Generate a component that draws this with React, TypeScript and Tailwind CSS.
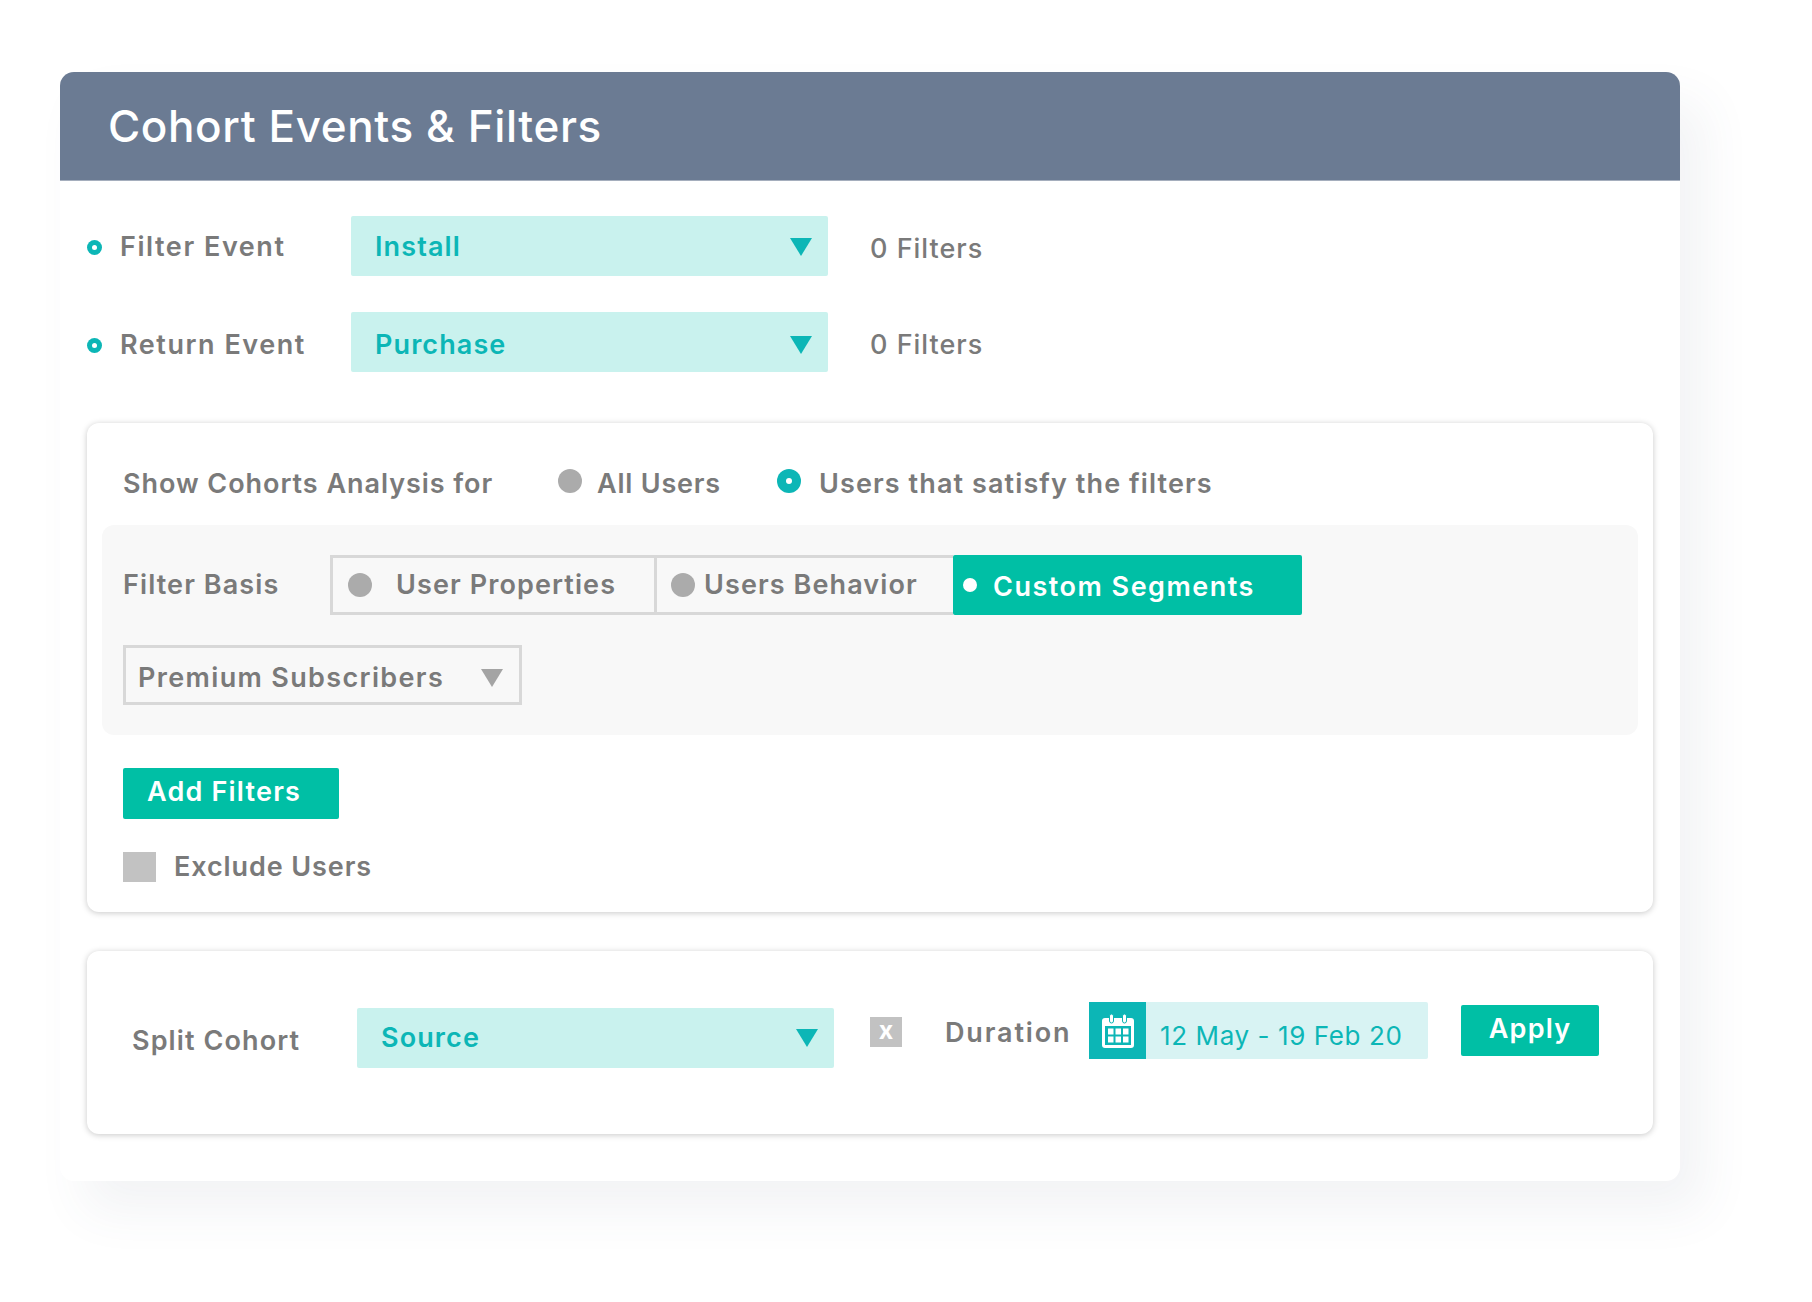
const font = { fontFamily: '"Inter", "Noto Sans", sans-serif' };

function Tri({ color, className = "" }: { color: string; className?: string }) {
  return (
    <svg width="22" height="18" viewBox="0 0 22 18" className={className}>
      <polygon points="0,0 22,0 11,18" fill={color} />
    </svg>
  );
}

function Bullet({ className = "" }: { className?: string }) {
  return <span className={`flex h-[15px] w-[15px] shrink-0 items-center justify-center rounded-full bg-[#0cb6b6] ${className}`}><span className="h-[5px] w-[5px] rounded-full bg-white" /></span>;
}

function Select({ label, className = "" }: { label: string; className?: string }) {
  return (
    <div className={`flex h-[60px] w-[477px] items-center justify-between rounded-[2px] bg-[#c9f2ee] pl-6 pr-[16px] text-[27px] font-semibold tracking-[1.1px] text-[#0cb6b6] ${className}`}>
      <span>{label}</span>
      <Tri color="#0cb6b6" />
    </div>
  );
}

function EventRow({ label, value, className = "", shift, selectShift }: { label: string; value: string; className?: string; shift: string; selectShift: string }) {
  return (
    <div className={`flex h-[60px] items-center ${className}`}>
      <Bullet className={shift} />
      <span className={`ml-[18px] w-[231px] text-[27px] font-semibold tracking-[1.55px] text-[#7a7a7a] ${shift}`}>{label}</span>
      <Select label={value} className={selectShift} />
      <span className="ml-[42px] mt-[6px] text-[27px] font-medium tracking-[1px] text-[#7a7a7a]">0 Filters</span>
    </div>
  );
}

function GrayDot() {
  return <span className="block h-6 w-6 shrink-0 rounded-full bg-[#ababab]" />;
}

function CalendarIcon() {
  return (
    <svg width="34" height="36" viewBox="0 0 34 36">
      <rect x="1" y="5" width="32" height="30" rx="3" fill="#fff" />
      <rect x="4" y="13" width="26" height="19" fill="#0cb6b6" />
      <rect x="8.5" y="1" width="4" height="9" rx="2" fill="#fff" stroke="#0cb6b6" strokeWidth="1" />
      <rect x="21.5" y="1" width="4" height="9" rx="2" fill="#fff" stroke="#0cb6b6" strokeWidth="1" />
      {[7, 14.5, 22].map((x) => [15.5, 23.5].map((y) => <rect key={`${x}-${y}`} x={x} y={y} width="5.5" height="6" fill="#fff" />))}
    </svg>
  );
}

export default function App() {
  return (
    <div className="h-[1302px] w-[1812px] overflow-hidden bg-white pl-[60px] pt-[72px]" style={font}>
      <div className="h-[1109px] w-[1620px] rounded-[14px] bg-white shadow-[24px_30px_50px_rgba(70,80,110,0.07)]">
        <div className="flex h-[109px] items-center rounded-t-[14px] border-b border-[#a5aebd] bg-[#6b7b93] pl-[48px] text-[44px] font-medium tracking-[0.6px] text-white">
          Cohort Events &amp; Filters
        </div>

        <div className="px-[27px] pt-[35px]">
          <EventRow label="Filter Event" value="Install" shift="mt-[2px]" selectShift="pt-[2px]" />
          <EventRow label="Return Event" value="Purchase" shift="mt-[6px]" selectShift="pt-[6px]" className="mt-[36px]" />

          <div className="mt-[51px] h-[489px] w-[1566px] rounded-[12px] bg-white shadow-[0_1px_6px_rgba(0,0,0,0.22)]">
            <div className="flex h-[102px] items-center pl-[36px] pt-[20px] text-[27px] font-semibold tracking-[1.1px] text-[#7a7a7a]">
              <span className="w-[435px] tracking-[0.95px]">Show Cohorts Analysis for</span>
              <span className="mb-[6px]"><GrayDot /></span>
              <span className="ml-[15px] w-[180px] tracking-[0.8px]">All Users</span>
              <span className="mb-[6px] flex h-6 w-6 shrink-0 items-center justify-center rounded-full bg-[#0cb6b6]"><span className="h-[6px] w-[6px] rounded-full bg-white" /></span>
              <span className="ml-[18px]">Users that satisfy the filters</span>
            </div>

            <div className="mx-[15px] h-[210px] rounded-[12px] bg-[#f8f8f8] pl-[21px] pt-[30px]">
              <div className="flex h-[60px] items-center text-[27px] font-semibold tracking-[1.1px] text-[#7a7a7a]">
                <span className="w-[207px]">Filter Basis</span>
                <div className="flex h-[60px] w-[327px] items-center border-[3px] border-[#d8d8d8] pl-[15px]">
                  <GrayDot />
                  <span className="ml-[24px]">User Properties</span>
                </div>
                <div className="-ml-[3px] flex h-[60px] w-[299px] items-center border-y-[3px] border-l-[3px] border-[#d8d8d8] pl-[14px]">
                  <GrayDot />
                  <span className="ml-[9px]">Users Behavior</span>
                </div>
                <div className="flex h-[60px] w-[349px] items-center rounded-[2px] bg-[#00bfa5] pl-[10px] text-white">
                  <span className="h-[14px] w-[14px] shrink-0 rounded-full bg-white" />
                  <span className="ml-[16px] mt-[5px] tracking-[1.5px]">Custom Segments</span>
                </div>
              </div>
              <div className="mt-[30px] flex h-[60px] w-[399px] items-center justify-between border-[3px] border-[#d8d8d8] pl-3 pr-[16px] pt-[6px] text-[27px] font-semibold tracking-[1.35px] text-[#7a7a7a]">
                <span>Premium Subscribers</span>
                <Tri color="#a4a4a4" />
              </div>
            </div>

            <button className="ml-[36px] mt-[33px] block h-[51px] w-[216px] rounded-[2px] bg-[#00bfa5] pb-[2px] pl-6 text-left text-[27px] font-semibold tracking-[1.2px] text-white">
              Add Filters
            </button>
            <div className="ml-[36px] mt-[27px] flex items-center">
              <span className="h-[30px] w-[33px] bg-[#c2c2c2]" />
              <span className="ml-[18px] mt-[1px] text-[27px] font-semibold tracking-[0.9px] text-[#7a7a7a]">Exclude Users</span>
            </div>
          </div>

          <div className="mt-[39px] flex h-[183px] w-[1566px] rounded-[12px] bg-white pl-[45px] shadow-[0_1px_6px_rgba(0,0,0,0.22)]">
            <span className="mt-[70px] w-[225px] text-[27px] font-semibold tracking-[1.1px] text-[#7a7a7a]">Split Cohort</span>
            <Select label="Source" className="mt-[57px]" />
            <span className="ml-[36px] mt-[66px] flex h-[30px] w-[32px] items-center justify-center bg-[#c2c2c2] pb-[3px] text-[25px] font-bold text-white">x</span>
            <span className="ml-[43px] mt-[62px] w-[144px] whitespace-nowrap text-[27px] font-semibold tracking-[1.85px] text-[#7a7a7a]">Duration</span>
            <div className="mt-[51px] flex h-[57px] w-[339px] rounded-[2px] bg-[#d8f3f3]">
              <span className="flex w-[57px] items-center justify-center bg-[#0cb6b6]"><CalendarIcon /></span>
              <span className="ml-[14px] mt-[14px] text-[26px] font-normal tracking-[0.6px] text-[#0cb6b6]">12 May - 19 Feb 20</span>
            </div>
            <button className="ml-[33px] mt-[54px] h-[51px] w-[138px] rounded-[2px] bg-[#00bfa5] pb-[2px] text-[27px] font-semibold tracking-[1.2px] text-white">Apply</button>
          </div>
        </div>
      </div>
    </div>
  );
}
